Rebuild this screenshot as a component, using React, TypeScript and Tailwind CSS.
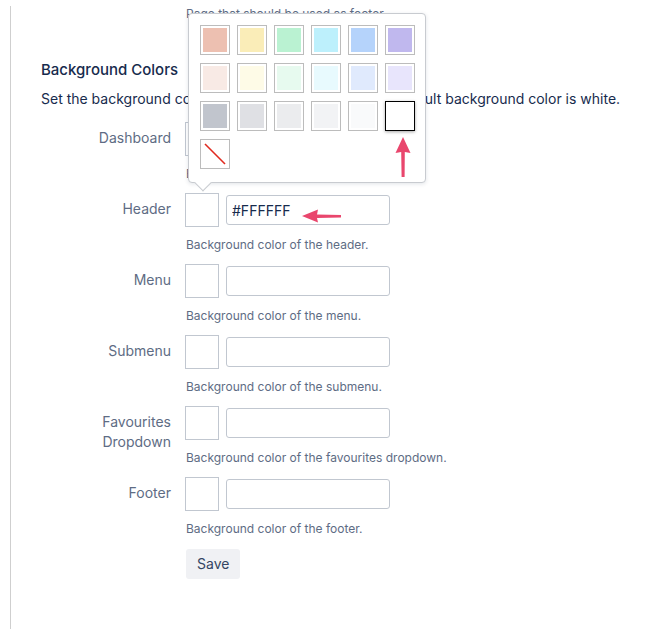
import { FC } from 'react';

const PALETTE = [
  '#EDC0B1', '#FAEDB8', '#BAF2D2', '#BDF0FC', '#B5D3FB', '#C0B8EE',
  '#F8EAE5', '#FEFBE7', '#E7FAEF', '#E8FAFE', '#E0EAFD', '#E8E5FC',
  '#C1C5CD', '#DFE0E4', '#EBECEE', '#F2F3F5', '#F9FAFB',
];

const ROWS = [
  { label: 'Dashboard', help: 'Background color of the dashboard.', value: '' },
  { label: 'Header', help: 'Background color of the header.', value: '#FFFFFF', open: true },
  { label: 'Menu', help: 'Background color of the menu.', value: '' },
  { label: 'Submenu', help: 'Background color of the submenu.', value: '' },
  { label: 'Favourites Dropdown', help: 'Background color of the favourites dropdown.', value: '' },
  { label: 'Footer', help: 'Background color of the footer.', value: '' },
];

const ColorPopover: FC = () => (
  <div className="absolute left-[2px] bottom-[43px] z-10 w-[238px] rounded-[4px] border border-[#c8cbd0] bg-white pt-[11px] pb-[13px] pl-[11px] shadow-[0_1px_4px_rgba(9,30,66,0.12)]">
    <div className="grid grid-cols-[repeat(6,30px)] gap-x-[7px] gap-y-2">
      {PALETTE.map(c => (
        <div key={c} className="h-[30px] w-[30px] border border-[#bcbcbc] bg-white p-[2px]">
          <div className="h-full w-full" style={{ backgroundColor: c }} />
        </div>
      ))}
      <div className="h-[30px] w-[30px] border border-black bg-white shadow-[0_1px_3px_rgba(0,0,0,0.35)]" />
      <div className="h-[30px] w-[30px] border border-[#bcbcbc] bg-white p-[2px]">
        <svg viewBox="0 0 24 24" className="h-full w-full">
          <line x1="2" y1="2" x2="22" y2="22" stroke="#e02a1f" strokeWidth="1.6" />
        </svg>
      </div>
    </div>
    {/* caret */}
    <div className="absolute -bottom-[7px] left-[8px] h-3 w-3 rotate-45 border-r border-b border-[#c8cbd0] bg-white" />
  </div>
);

const Arrows: FC = () => (
  <svg className="pointer-events-none absolute left-0 top-0 z-20" width="662" height="629" viewBox="0 0 662 629">
    <g fill="#e9466d" stroke="none">
      <path d="M302 210 L318 203.5 L317 208.4 L341 209 L341 211.6 L317 212 L318 216.5 Z" />
      <path d="M403 131 L410.5 147 L404.8 146 L404.6 171 L401.6 171 L401.2 146 L395.5 147 Z" />
    </g>
  </svg>
);

export default function App() {
  return (
    <div className="relative min-h-screen bg-white font-['Inter',sans-serif]">
      <div className="ml-[10px] min-h-screen border-l border-[#cfcfcf] pl-[30px]">
        <p className="ml-[145px] mt-[6px] text-xs leading-4 text-[#5e6c84]">Page that should be used as footer</p>

        <h2 className="mt-[36px] text-[15px] leading-6 font-medium text-[#172b4d]">Background Colors</h2>
        <p className="mt-[7px] text-sm leading-5 text-[#172b4d]">
          Set the background colors of the different areas. The default background color is white.
        </p>

        <div className="mt-[13px] flex flex-col gap-[11px]">
          {ROWS.map(row => (
            <div key={row.label} className="flex items-start gap-[14px]">
              <label className="w-[130px] pt-[6px] text-right text-sm leading-5 text-[#5e6c84]">{row.label}</label>
              <div className="flex flex-col">
                <div className="flex items-start gap-[7px]">
                  <div className="relative h-[34px] w-[34px] border border-[#c1c7d0] bg-white">
                    {row.open && <ColorPopover />}
                  </div>
                  <input
                    readOnly
                    value={row.value}
                    className="mt-[2px] h-[30px] w-[164px] rounded-[3px] border border-[#c1c7d0] bg-white px-[5px] text-sm text-[#172b4d] outline-none"
                  />
                </div>
                <p className="mt-[10px] pl-[1px] text-xs leading-4 text-[#5e6c84]">{row.help}</p>
              </div>
            </div>
          ))}
        </div>

        <button className="ml-[145px] mt-3 h-[30px] rounded-[3px] bg-[#f0f1f4] px-[11px] text-sm text-[#344563]">Save</button>
      </div>
      <Arrows />
    </div>
  );
}
